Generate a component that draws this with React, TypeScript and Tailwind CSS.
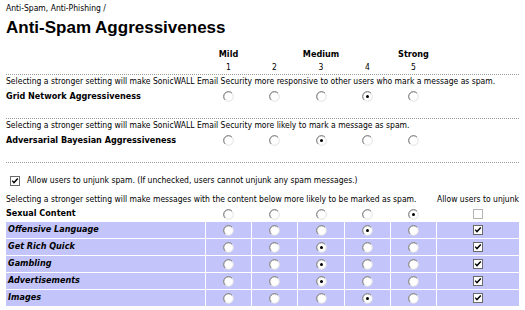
import React from "react";

const Radio = ({ checked = false }: { checked?: boolean }) => (
  <svg width="11" height="11" viewBox="0 0 11 11" className="block">
    <circle cx="5.5" cy="5.5" r="4.8" fill="#ffffff" stroke="#e0e0e0" />
    <path d="M2.1 8.9 A4.8 4.8 0 0 1 8.9 2.1" fill="none" stroke="#707070" />
    {checked && <circle cx="5.5" cy="5.5" r="1.5" fill="#000000" />}
  </svg>
);

const Check = ({ checked = false }: { checked?: boolean }) => (
  <svg width="10" height="10" viewBox="0 0 10 10" className="block">
    <rect x="0.5" y="0.5" width="9" height="9" fill="#ffffff" stroke={checked ? "#6a6a6a" : "#b4b4b4"} />
    {checked && <path d="M2.2 4.6 L4 6.6 L7.8 2.6" fill="none" stroke="#000000" strokeWidth="1.4" />}
  </svg>
);

const cols = "grid grid-cols-[199px_45px_45px_46px_45px_45px_82px] gap-x-px";

const Cell = ({ children }: { children?: React.ReactNode }) => (
  <div className="flex items-center justify-center">{children}</div>
);

const RadioRow = ({ label, value }: { label: string; value: number }) => (
  <div className={`${cols} h-[17px]`}>
    <div className="flex items-center font-bold text-[9px]">{label}</div>
    {[1, 2, 3, 4, 5].map((n) => (
      <Cell key={n}>
        <Radio checked={n === value} />
      </Cell>
    ))}
    <div />
  </div>
);

const content: { label: string; value: number; allow: boolean }[] = [
  { label: "Offensive Language", value: 4, allow: true },
  { label: "Get Rich Quick", value: 3, allow: true },
  { label: "Gambling", value: 3, allow: true },
  { label: "Advertisements", value: 3, allow: true },
  { label: "Images", value: 4, allow: true },
];

export default function App() {
  return (
    <div className="w-[525px] h-[310px] overflow-hidden bg-white px-[6px] text-black font-['DejaVu_Sans_Condensed','DejaVu_Sans',sans-serif] font-stretch-condensed text-[8.5px]">
      <div className="h-[17px] flex items-center">Anti-Spam, Anti-Phishing /</div>
      <div className="h-[20px] flex items-center font-['Liberation_Sans',Arial,sans-serif] font-stretch-normal font-bold text-[17px] leading-none">
        Anti-Spam Aggressiveness
      </div>
      <div className="h-[11px]" />
      <div className={`${cols} h-[13px] font-bold text-[9px]`}>
        <div />
        <Cell>Mild</Cell>
        <div />
        <Cell>Medium</Cell>
        <div />
        <Cell>Strong</Cell>
        <div />
      </div>
      <div className={`${cols} h-[13px]`}>
        <div />
        <Cell>1</Cell>
        <Cell>2</Cell>
        <Cell>3</Cell>
        <Cell>4</Cell>
        <Cell>5</Cell>
        <div />
      </div>
      <div className="border-t border-dotted border-[#9c9c9c]" />
      <div className="h-[13px] flex items-center whitespace-nowrap">
        Selecting a stronger setting will make SonicWALL Email Security more responsive to other users who mark a message as spam.
      </div>
      <RadioRow label="Grid Network Aggressiveness" value={4} />
      <div className="h-[13px]" />
      <div className="border-t border-dotted border-[#9c9c9c]" />
      <div className="h-[13px] flex items-center whitespace-nowrap">
        Selecting a stronger setting will make SonicWALL Email Security more likely to mark a message as spam.
      </div>
      <RadioRow label="Adversarial Bayesian Aggressiveness" value={3} />
      <div className="h-[13px]" />
      <div className="border-t border-dotted border-[#9c9c9c]" />
      <div className="mt-[9px] h-[17px] flex items-center gap-[7px] pl-[4px]">
        <Check checked />
        <span>Allow users to unjunk spam. (If unchecked, users cannot unjunk any spam messages.)</span>
      </div>
      <div className="mt-[3px] grid grid-cols-[199px_45px_45px_46px_45px_45px_82px] gap-px">
        <div className="col-span-6 h-[14px] flex items-center whitespace-nowrap">
          Selecting a stronger setting will make messages with the content below more likely to be marked as spam.
        </div>
        <div className="h-[14px] flex items-center justify-end whitespace-nowrap">Allow users to unjunk</div>

        <div className="h-[14px] flex items-center font-bold text-[9px]">Sexual Content</div>
        {[1, 2, 3, 4, 5].map((n) => (
          <Cell key={n}>
            <Radio checked={n === 5} />
          </Cell>
        ))}
        <Cell>
          <Check />
        </Cell>

        {content.map((r) => (
          <React.Fragment key={r.label}>
            <div className="h-[16px] flex items-center bg-[#c3c5fa] font-bold italic text-[9px] pl-[2px]">{r.label}</div>
            {[1, 2, 3, 4, 5].map((n) => (
              <div key={n} className="flex items-center justify-center bg-[#c3c5fa]">
                <Radio checked={n === r.value} />
              </div>
            ))}
            <div className="flex items-center justify-center bg-[#c3c5fa]">
              <Check checked={r.allow} />
            </div>
          </React.Fragment>
        ))}
      </div>
    </div>
  );
}
